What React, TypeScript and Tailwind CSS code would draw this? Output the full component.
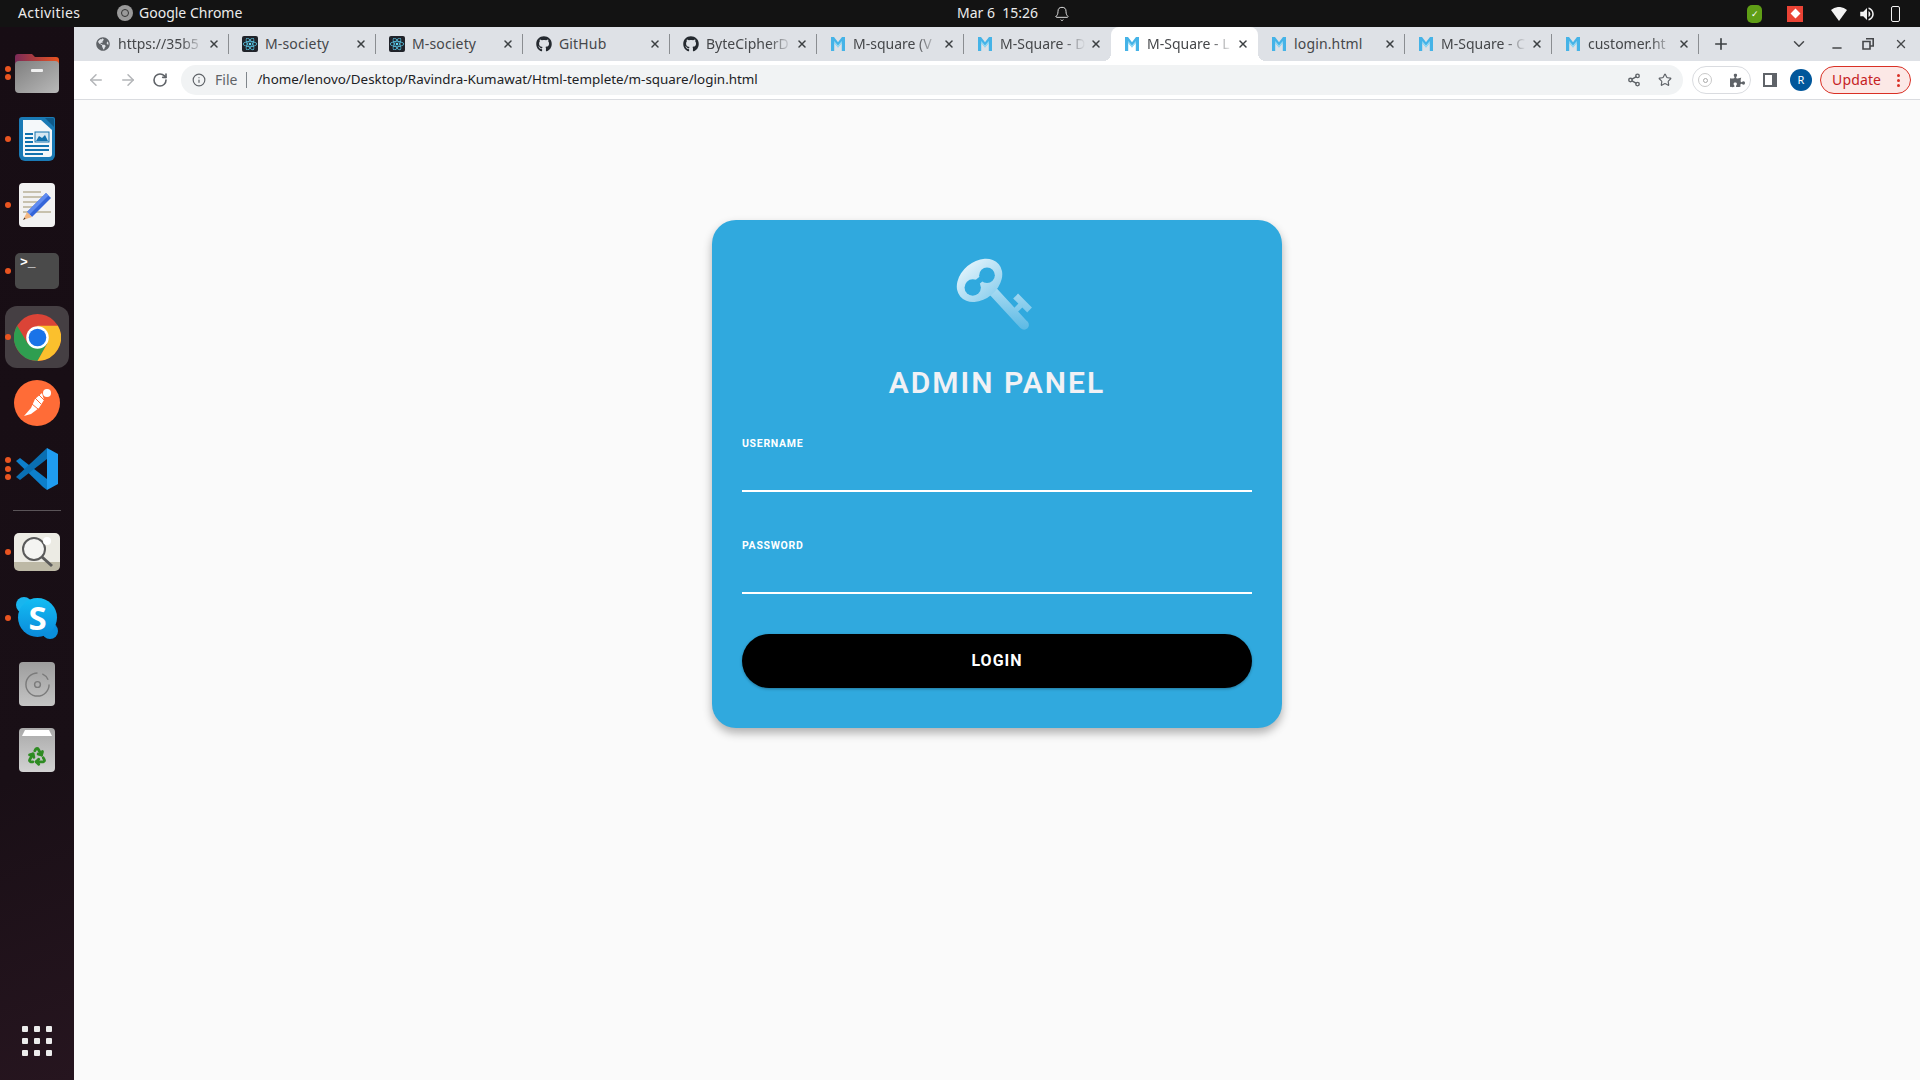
import { Bell, ChevronDown, Minus, Plus, RotateCw, ArrowLeft, ArrowRight, Info, Star, X, Recycle } from "lucide-react";
import { FaGithub, FaReact, FaGlobeAmericas, FaPuzzlePiece } from "react-icons/fa";
import { FiShare2 } from "react-icons/fi";
import { MdVolumeUp } from "react-icons/md";

type TabInfo = { title: string; icon: string; fade?: boolean };

const tabs: TabInfo[] = [
  { title: "https://35b5", icon: "globe", fade: true },
  { title: "M-society", icon: "react" },
  { title: "M-society", icon: "react" },
  { title: "GitHub", icon: "github" },
  { title: "ByteCipherD", icon: "github", fade: true },
  { title: "M-square (V", icon: "m", fade: true },
  { title: "M-Square - D", icon: "m", fade: true },
  { title: "M-Square - L", icon: "m", fade: true },
  { title: "login.html", icon: "m" },
  { title: "M-Square - C", icon: "m", fade: true },
  { title: "customer.ht", icon: "m", fade: true },
];

function MLogo() {
  return (
    <svg viewBox="0 0 16 16" className="w-4 h-4">
      <path d="M1 1 H4 L8 6.2 L12 1 H15 V15 H11.8 V6.8 L8 11.4 L4.2 6.8 V15 H1 Z" fill="#45b3e7" />
      <path d="M4.2 6.8 L8 11.4 L11.8 6.8 V5 L8 9.6 L4.2 5 Z" fill="#9adcf5" />
    </svg>
  );
}

function TabIcon({ icon }: { icon: string }) {
  if (icon === "globe") return <FaGlobeAmericas className="w-4 h-4 p-px text-[#5f6368]" />;
  if (icon === "github") return <FaGithub className="w-4 h-4 text-[#24292f]" />;
  if (icon === "react")
    return (
      <div className="w-4 h-4 rounded-[2px] bg-[#20232a] flex items-center justify-center">
        <FaReact className="w-3.5 h-3.5 text-[#61dafb]" />
      </div>
    );
  return <MLogo />;
}

function Tab({ tab, index }: { tab: TabInfo; index: number }) {
  const active = index === 7;
  const hideSep = index === 6 || index === 7;
  return (
    <div
      className={
        active
          ? "relative w-[147px] h-[34px] flex items-center pl-[13px] bg-white rounded-t-lg"
          : "relative w-[147px] h-[34px] flex items-center pl-[13px]"
      }
    >
      {active && (
        <>
          <div className="absolute left-[-8px] bottom-0 w-2 h-2 bg-[radial-gradient(circle_at_0_0,transparent_8px,white_8px)]" />
          <div className="absolute right-[-8px] bottom-0 w-2 h-2 bg-[radial-gradient(circle_at_100%_0,transparent_8px,white_8px)]" />
        </>
      )}
      <TabIcon icon={tab.icon} />
      <div
        className={
          tab.fade
            ? "ml-[7px] w-[90px] pb-[2px] overflow-hidden whitespace-nowrap text-[14px] text-[#45474a] [mask-image:linear-gradient(to_right,black_70%,transparent_95%)]"
            : "ml-[7px] w-[90px] pb-[2px] overflow-hidden whitespace-nowrap text-[14px] tracking-[0.15px] text-[#45474a]"
        }
      >
        {tab.title}
      </div>
      <X className="w-3 h-3 text-[#3c4043]" strokeWidth={3} />
      <div className={hideSep ? "ml-2 w-px h-5" : "ml-2 w-px h-5 bg-[#8a8d91]"} />
    </div>
  );
}

function Dots({ ys }: { ys: string[] }) {
  return (
    <>
      {ys.map((cls) => (
        <div key={cls} className={cls} />
      ))}
    </>
  );
}

function DockSlot({ dots, children, highlight }: { dots?: string[]; children: React.ReactNode; highlight?: boolean }) {
  return (
    <div className="relative h-[66px] flex items-center justify-center">
      {highlight && <div className="absolute left-[5px] top-[2px] w-[64px] h-[62px] rounded-xl bg-[#453f43]" />}
      {dots && <Dots ys={dots} />}
      <div className="relative">{children}</div>
    </div>
  );
}

const dot = "absolute left-[5px] w-[6px] h-[6px] rounded-full bg-[#e95420] ";

function Dock() {
  return (
    <div className="w-[74px] shrink-0 flex flex-col pt-[13px] bg-[linear-gradient(160deg,#170d14_0%,#190f16_70%,#26151f_100%)]">
      <DockSlot dots={[dot + "top-[26px]", dot + "top-[34px]"]}>
        <svg viewBox="0 0 44 40" className="w-[44px] h-[40px]">
          <defs>
            <linearGradient id="folderTab" x1="0" x2="1">
              <stop offset="0" stopColor="#7b2a58" />
              <stop offset="1" stopColor="#e95420" />
            </linearGradient>
            <linearGradient id="folderBody" x1="0" y1="0" x2="1" y2="1">
              <stop offset="0" stopColor="#7f7f7f" />
              <stop offset="1" stopColor="#b9b9b9" />
            </linearGradient>
          </defs>
          <path d="M0 4 a3 3 0 0 1 3 -3 H17 l3 3 H41 a3 3 0 0 1 3 3 V20 H0 Z" fill="url(#folderTab)" />
          <rect x="0" y="8" width="44" height="32" rx="4" fill="url(#folderBody)" />
          <rect x="16" y="16" width="12" height="3" rx="1" fill="#f0f0f0" />
        </svg>
      </DockSlot>
      <DockSlot dots={[dot + "top-[30px]"]}>
        <svg viewBox="0 0 36 44" className="w-9 h-11">
          <path d="M3 0 H34 a2 2 0 0 1 2 2 V38 a6 6 0 0 1 -6 6 H6 a6 6 0 0 1 -6 -6 V3 a3 3 0 0 1 3 -3 Z" fill="#1a7ab5" />
          <path d="M26 1 H34 a2 2 0 0 1 1 1 V10 Z" fill="#0e5a8a" />
          <path d="M4 3 H22 L33 13 V37 a3 3 0 0 1 -3 3 H6 a2 2 0 0 1 -2 -2 Z" fill="#f5f8fa" />
          <rect x="6" y="16" width="8" height="2" fill="#1272ae" />
          <rect x="6" y="20" width="8" height="2" fill="#1272ae" />
          <rect x="6" y="24" width="8" height="2" fill="#1272ae" />
          <rect x="16" y="15" width="14" height="10" fill="#d6e8f3" stroke="#1272ae" />
          <path d="M17 24 L20 19 L23 21 L26 18 L29 24 Z" fill="#1272ae" />
          <rect x="6" y="28" width="24" height="2" fill="#1272ae" />
          <rect x="6" y="32" width="24" height="2" fill="#1272ae" />
          <rect x="6" y="36" width="18" height="2" fill="#1272ae" />
        </svg>
      </DockSlot>
      <DockSlot dots={[dot + "top-[30px]"]}>
        <svg viewBox="0 0 36 44" className="w-9 h-11">
          <rect width="36" height="44" rx="4" fill="#f2f2f2" />
          <rect x="4" y="8" width="18" height="2" fill="#c7c1ae" />
          <rect x="4" y="13" width="20" height="2" fill="#c7c1ae" />
          <rect x="4" y="18" width="18" height="2" fill="#c7c1ae" />
          <rect x="4" y="23" width="14" height="2" fill="#c7c1ae" />
          <rect x="4" y="28" width="28" height="2" fill="#c7c1ae" />
          <path d="M27 10 L32 15 L13 34 L8 29 Z" fill="#3465d9" />
          <path d="M27 10 L29.5 12.5 L10.5 31.5 L8 29 Z" fill="#5f8bf0" />
          <path d="M8 29 L13 34 L4 37 Z" fill="#f2b782" />
          <path d="M5.5 34.5 L6.5 35.8 L4 37 Z" fill="#333" />
        </svg>
      </DockSlot>
      <DockSlot dots={[dot + "top-[30px]"]}>
        <div className="relative w-[44px] h-[36px] rounded-[5px] bg-[#4a4a4a] px-[5px] pt-[2px] text-[13px] leading-[15px] text-white font-['Liberation_Mono',monospace] font-bold">
          &gt;_
        </div>
      </DockSlot>
      <DockSlot highlight dots={[dot + "top-[30px]"]}>
        <svg viewBox="0 0 48 48" className="w-[47px] h-[47px]">
          <circle cx="24" cy="24" r="24" fill="#db4437" />
          <path d="M3.2 12 A24 24 0 0 0 24 48 L34 30 L24 24 L14 30 Z" fill="#2f9e50" />
          <path d="M44.8 12 A24 24 0 0 1 24 48 L34 30 L24 24 L24 12 Z" fill="#fbc02d" />
          <circle cx="24" cy="24" r="11.5" fill="#fff" />
          <circle cx="24" cy="24" r="9" fill="#1a73e8" />
        </svg>
      </DockSlot>
      <DockSlot>
        <svg viewBox="0 0 46 46" className="w-[46px] h-[46px]">
          <circle cx="23" cy="23" r="23" fill="#ff6c37" />
          <circle cx="33" cy="13" r="4" fill="#fff" />
          <path d="M28 13 L21 19 L17 28 L10 36 L17 34 L25 28 L30 20 Z" fill="#fff" />
          <path d="M24 14 L30 20 M21 18 L27 24 M18 24 L24 29" stroke="#ff6c37" strokeWidth="1" />
        </svg>
      </DockSlot>
      <DockSlot dots={[dot + "top-[21px]", dot + "top-[30px]", dot + "top-[38px]"]}>
        <svg viewBox="0 0 42 42" className="w-[42px] h-[42px]">
          <path d="M0 13 L4 10 L31 31 V42 L27 39 Z" fill="#0d7fcb" />
          <path d="M31 0 V11 L4 32 L0 29 Z" fill="#0a6fb3" />
          <path d="M31 0 L42 6 V36 L31 42 Z" fill="#1f9cf0" />
        </svg>
      </DockSlot>
      <div className="h-[17px] flex items-center justify-center">
        <div className="w-12 h-px bg-[#5a5458]" />
      </div>
      <DockSlot dots={[dot + "top-[30px]"]}>
        <div className="w-[46px] h-[38px] rounded-[5px] bg-[linear-gradient(180deg,#ecebe4_0%,#ecebe4_75%,#bdb9a6_76%)] flex items-center justify-center">
          <svg viewBox="0 0 38 38" className="w-[38px] h-[38px]">
            <circle cx="16" cy="16" r="11" fill="#f4f4f2" stroke="#5a5a5a" strokeWidth="2" />
            <circle cx="29" cy="8" r="4" fill="#fff" />
            <path d="M24 24 L34 33" stroke="#5a5a5a" strokeWidth="3" />
          </svg>
        </div>
      </DockSlot>
      <DockSlot dots={[dot + "top-[30px]"]}>
        <div className="relative w-[42px] h-[42px]">
          <div className="absolute left-0 top-0 w-4 h-4 rounded-full bg-[#19b5ee]" />
          <div className="absolute right-0 bottom-0 w-4 h-4 rounded-full bg-[#0a8fdc]" />
          <div className="absolute left-[2px] top-[1px] w-[39px] h-[39px] rounded-full bg-[linear-gradient(180deg,#14bdf3,#0a8ada)] flex items-center justify-center">
            <span className="text-[33px] leading-none text-white font-bold font-['Open_Sans',sans-serif]">S</span>
          </div>
        </div>
      </DockSlot>
      <DockSlot>
        <div className="w-9 h-11 rounded-[4px] bg-[linear-gradient(180deg,#9d9d9d,#c4c4c4)] flex items-center justify-center">
          <svg viewBox="0 0 28 28" className="w-[27px] h-[27px]">
            <path d="M14 2 A12 12 0 1 0 26 14" fill="none" stroke="#7b7b7b" strokeWidth="1.5" />
            <path d="M19 3 A12 12 0 0 1 25 9" fill="none" stroke="#7b7b7b" strokeWidth="1.5" />
            <circle cx="14" cy="14" r="3" fill="none" stroke="#7b7b7b" strokeWidth="1.5" />
          </svg>
        </div>
      </DockSlot>
      <DockSlot>
        <div className="relative w-9 h-11 rounded-[4px] bg-[linear-gradient(180deg,#a9a9a9,#d2d2d2)] flex items-center justify-center pt-[12px]">
          <div className="absolute left-[3px] top-[2px] w-[30px] h-[6px] bg-white [clip-path:polygon(10%_0,90%_0,100%_100%,0_100%)]" />
          <Recycle className="w-[20px] h-[20px] text-[#2e8b22]" strokeWidth={3.4} />
        </div>
      </DockSlot>
      <div className="mt-auto pb-[24px] flex justify-center">
        <div className="grid grid-cols-3 gap-[6px]">
          {[0, 1, 2, 3, 4, 5, 6, 7, 8].map((n) => (
            <div key={n} className="w-[6px] h-[6px] rounded-[1px] bg-[#ececec]" />
          ))}
        </div>
      </div>
    </div>
  );
}

function TopBar() {
  return (
    <div className="h-[27px] shrink-0 bg-[#131313] flex items-center text-[14px] text-[#ececec] font-['Noto_Sans',sans-serif]">
      <div className="w-[957px] flex items-center pl-[18px] pb-[2px]">
        <span className="w-[99px] tracking-[0.4px]">Activities</span>
        <div className="w-4 h-4 rounded-full bg-[#9a9a9a] flex items-center justify-center">
          <div className="w-2 h-2 rounded-full border border-[#333]" />
        </div>
        <span className="ml-[6px]">Google Chrome</span>
      </div>
      <span className="w-[96px] pb-[2px] whitespace-pre">Mar 6  15:26</span>
      <Bell className="w-4 h-4 ml-[1px]" strokeWidth={1.4} />
      <div className="ml-auto flex items-center pr-[20px]">
        <div className="w-[15px] h-[18px] rounded-[5px] bg-[#5f9e16] flex items-center justify-center text-[9px] leading-none text-white">✓</div>
        <div className="ml-[25px] w-4 h-4 bg-[#ea4335] flex items-center justify-center">
          <div className="w-[7px] h-[7px] rotate-45 bg-white" />
        </div>
        <svg viewBox="0 0 16 14" className="ml-[28px] w-4 h-[14px]">
          <path d="M0 3 A12 12 0 0 1 16 3 L8 14 Z" fill="#f2f2f2" />
        </svg>
        <MdVolumeUp className="ml-[11px] w-[18px] h-[18px] text-[#f2f2f2]" />
        <div className="ml-[15px] w-[9px] h-4 rounded-[2px] border-[1.5px] border-[#f2f2f2] bg-[#131313]" />
      </div>
    </div>
  );
}

function TabStrip() {
  return (
    <div className="h-[34px] shrink-0 bg-[#dee1e6] flex items-center pl-2 font-['Noto_Sans',sans-serif]">
      {tabs.map((t, i) => (
        <Tab key={i} tab={t} index={i} />
      ))}
      <Plus className="ml-[13px] w-[18px] h-[18px] text-[#3c4043]" strokeWidth={2.2} />
      <ChevronDown className="ml-[60px] w-[18px] h-[18px] text-[#45474a]" strokeWidth={2} />
      <Minus className="ml-[22px] w-[14px] h-[14px] mt-[8px] text-[#45474a]" strokeWidth={2.4} />
      <svg viewBox="0 0 12 12" className="ml-[18px] w-3 h-3">
        <path d="M4 0.8 H11.2 V8 H8.5 M1 3.5 H8 V11 H1 Z" fill="none" stroke="#45474a" strokeWidth="1.6" />
      </svg>
      <X className="ml-[20px] w-[14px] h-[14px] text-[#45474a]" strokeWidth={2.4} />
    </div>
  );
}

function Toolbar() {
  return (
    <div className="h-[39px] shrink-0 bg-white border-b border-[#dadce0] flex items-center font-['Noto_Sans',sans-serif]">
      <ArrowLeft className="ml-[13px] w-[18px] h-[18px] text-[#b3b5b8]" strokeWidth={2} />
      <ArrowRight className="ml-[14px] w-[18px] h-[18px] text-[#b3b5b8]" strokeWidth={2} />
      <RotateCw className="ml-[15px] w-4 h-4 text-[#5f6368]" strokeWidth={2.4} />
      <div className="ml-[13px] w-[1502px] h-[30px] rounded-full bg-[#f1f3f4] flex items-center text-[14px]">
        <Info className="ml-[11px] w-[14px] h-[14px] text-[#5f6368]" strokeWidth={2} />
        <span className="ml-[9px] pb-[1px] text-[#5f6368]">File</span>
        <div className="ml-[9px] w-px h-4 bg-[#80868b]" />
        <span className="ml-[10px] pb-[1px] text-[13.4px] text-[#202124]">/home/lenovo/Desktop/Ravindra-Kumawat/Html-templete/m-square/login.html</span>
        <FiShare2 className="ml-auto w-[14px] h-[14px] text-[#5f6368]" strokeWidth={2.4} />
        <Star className="ml-[17px] mr-[11px] w-[14px] h-[14px] text-[#5f6368]" strokeWidth={2} />
      </div>
      <div className="ml-[9px] w-[59px] h-[28px] rounded-full border border-[#dadce0] flex items-center justify-between px-[5px]">
        <div className="w-[14px] h-[14px] rounded-full border border-[#c9c9c9] flex items-center justify-center">
          <div className="w-[5px] h-[5px] rounded-full border border-[#a9a9a9]" />
        </div>
        <FaPuzzlePiece className="w-[15px] h-[15px] text-[#5f6368]" />
      </div>
      <div className="ml-[12px] w-[14px] h-[14px] border-2 border-r-[5px] border-[#5f6368]" />
      <div className="ml-[13px] w-[22px] h-[22px] rounded-full bg-[#01579b] text-white text-[11px] flex items-center justify-center">R</div>
      <div className="ml-[8px] w-[91px] h-[28px] rounded-full border border-[#d93025] bg-[#fce8e6] flex items-center pl-[11px] text-[14px] text-[#c5221f]">
        <span className="pb-[2px] tracking-[0.15px]">Update</span>
        <div className="ml-[16px] flex flex-col gap-[2px]">
          <div className="w-[3px] h-[3px] rounded-full bg-[#d93025]" />
          <div className="w-[3px] h-[3px] rounded-full bg-[#d93025]" />
          <div className="w-[3px] h-[3px] rounded-full bg-[#d93025]" />
        </div>
      </div>
    </div>
  );
}

function KeyIcon() {
  return (
    <svg viewBox="75 51 235 225" className="w-[80px] h-[77px] mr-[6px]">
      <defs>
        <linearGradient id="keyFill" gradientUnits="userSpaceOnUse" x1="0" y1="55" x2="0" y2="272">
          <stop offset="0" stopColor="#e4f4fc" />
          <stop offset="1" stopColor="#58b8e4" />
        </linearGradient>
      </defs>
      <path d="M190 155 L280 252 L281 253" stroke="url(#keyFill)" strokeWidth="28" strokeLinecap="round" fill="none" />
      <path d="M256 168 L296 208 L297 209" stroke="url(#keyFill)" strokeWidth="20" strokeLinecap="butt" fill="none" />
      <path d="M276 190 L248 218 L247 219" stroke="url(#keyFill)" strokeWidth="16" fill="none" />
      <ellipse cx="150" cy="122" rx="74" ry="55" transform="rotate(-40 150 122)" fill="url(#keyFill)" />
      <circle cx="172" cy="107" r="23" fill="#30a9de" />
      <circle cx="130" cy="143" r="24" fill="#30a9de" />
      <rect x="140" y="113" width="22" height="16" transform="rotate(-40 151 121)" fill="#30a9de" />
    </svg>
  );
}

function LoginCard() {
  return (
    <div className="w-[570px] rounded-[24px] bg-[#30a9de] shadow-[0_5px_10px_rgba(0,0,0,0.3)] px-[30px] pt-[36px] pb-[40px] flex flex-col font-['Roboto',sans-serif]">
      <div className="flex justify-center">
        <KeyIcon />
      </div>
      <h1 className="mt-[32px] h-[36px] leading-[36px] text-center text-[30px] font-semibold tracking-[2px] text-[#f1f1f5]">ADMIN PANEL</h1>
      <label className="mt-[36px] h-[14px] leading-[14px] text-[10.5px] font-bold tracking-[0.7px] text-white">USERNAME</label>
      <input type="text" className="h-[41px] border-b-2 border-white bg-transparent outline-none text-white" />
      <label className="mt-[47px] h-[14px] leading-[14px] text-[10.5px] font-bold tracking-[0.7px] text-white">PASSWORD</label>
      <input type="password" className="h-[41px] border-b-2 border-white bg-transparent outline-none text-white" />
      <button className="mt-[40px] h-[54px] rounded-[27px] bg-black text-white text-[16px] font-bold tracking-[1px] shadow-[0_1px_3px_rgba(0,0,0,0.3)]">LOGIN</button>
    </div>
  );
}

export default function App() {
  return (
    <div className="w-[1920px] h-[1080px] overflow-hidden flex flex-col">
      <TopBar />
      <div className="flex-1 flex min-h-0">
        <Dock />
        <div className="flex-1 flex flex-col min-w-0">
          <TabStrip />
          <Toolbar />
          <div className="flex-1 bg-[#fafafa] flex justify-center items-start pt-[120px]">
            <LoginCard />
          </div>
        </div>
      </div>
    </div>
  );
}
